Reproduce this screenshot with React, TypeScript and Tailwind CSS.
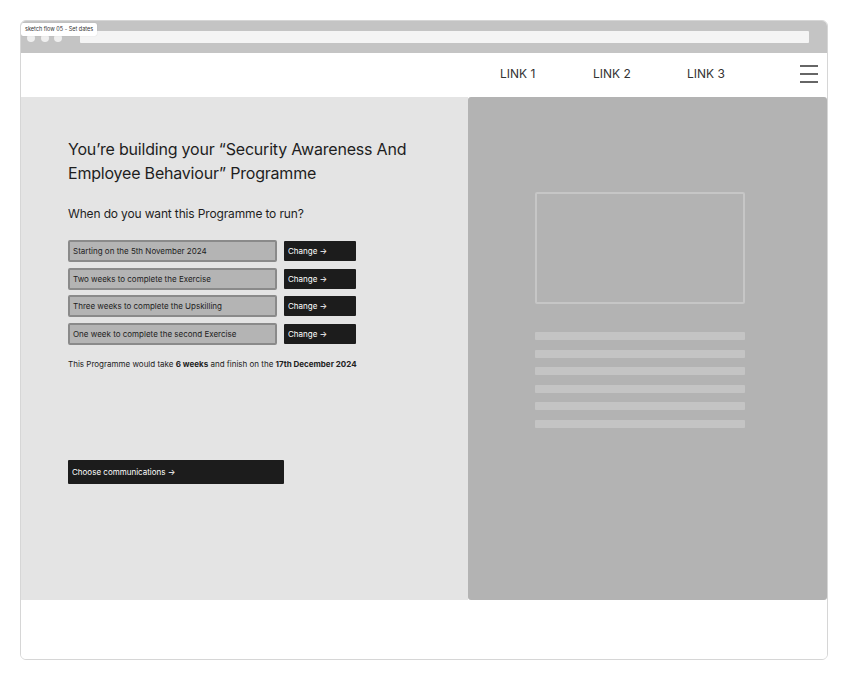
const rows = [
    'Starting on the 5th November 2024',
    'Two weeks to complete the Exercise',
    'Three weeks to complete the Upskilling',
    'One week to complete the second Exercise',
];

export default function App() {
    return (
        <div className="w-[848px] h-[680px] bg-white pt-[20px] pl-[20px] font-['Inter',sans-serif] text-[#222]">
            <div className="relative w-[808px] h-[640px] border border-[#d6d6d6] rounded-[6px] overflow-hidden flex flex-col">
                {/* browser chrome */}
                <div className="h-[32px] bg-[#c4c4c4] flex items-center pl-[6px] pr-[18px] shrink-0">
                    <div className="flex gap-[5.5px] mt-[2px]">
                        <span className="w-[8px] h-[8px] rounded-full bg-[#efefef]" />
                        <span className="w-[8px] h-[8px] rounded-full bg-[#efefef]" />
                        <span className="w-[8px] h-[8px] rounded-full bg-[#efefef]" />
                    </div>
                    <div className="ml-[18px] flex-1 h-[12px] bg-[#f4f4f4] rounded-[1px]" />
                </div>
                <div className="absolute left-0 top-[2px] h-[13px] px-[4px] bg-white text-[5.5px] leading-[13px] text-[#333] rounded-[2px] shadow-[0_0_1px_rgba(0,0,0,0.2)]">
                    sketch flow 05 - Set dates
                </div>

                {/* nav */}
                <div className="h-[44px] bg-white flex items-center pb-[3px] shrink-0 text-[12px] text-[#333]">
                    <div className="ml-[479px] w-[93px]">LINK 1</div>
                    <div className="w-[94px]">LINK 2</div>
                    <div className="w-[113px]">LINK 3</div>
                    <div className="flex flex-col gap-[6px]">
                        <span className="w-[18px] h-[2px] bg-[#666]" />
                        <span className="w-[18px] h-[2px] bg-[#666]" />
                        <span className="w-[18px] h-[2px] bg-[#666]" />
                    </div>
                </div>

                {/* main */}
                <div className="h-[503px] flex shrink-0">
                    <div className="w-[447px] shrink-0 bg-[#e4e4e4] pl-[47px] pt-[40px]">
                        <h1 className="text-[16px] leading-[24px] text-[#1e1e1e] tracking-[-0.2px]">
                            You’re building your “Security Awareness And<br />Employee Behaviour” Programme
                        </h1>
                        <h2 className="mt-[20px] text-[12px] leading-[18px] text-[#1e1e1e] tracking-[-0.15px]">
                            When do you want this Programme to run?
                        </h2>
                        <div className="mt-[17px] flex flex-col gap-[5.5px]">
                            {rows.map(r => (
                                <div key={r} className="flex items-center gap-[7px]">
                                    <div className="w-[209px] h-[22px] border-2 border-[#8a8a8a] bg-[#b4b4b4] rounded-[2px] flex items-center pl-[3px] text-[8px] text-[#222]">
                                        {r}
                                    </div>
                                    <div className="w-[72px] h-[20px] bg-[#1c1c1c] rounded-[1px] flex items-center pl-[4px] text-[8px] text-white">
                                        Change →
                                    </div>
                                </div>
                            ))}
                        </div>
                        <p className="mt-[12px] text-[8px] leading-[14px] text-[#222]">
                            This Programme would take <b>6 weeks</b> and finish on the <b>17th December 2024</b>
                        </p>
                        <div className="mt-[89px] w-[216px] h-[24px] bg-[#1c1c1c] rounded-[1px] flex items-center pl-[4px] text-[8px] text-white">
                            Choose communications →
                        </div>
                    </div>
                    <div className="flex-1 bg-[#b3b3b3] rounded-[3px] pl-[67px] pt-[95px]">
                        <div className="w-[210px] h-[112px] border-2 border-[#c6c6c6] rounded-[2px]" />
                        <div className="mt-[28px] flex flex-col gap-[9.5px]">
                            {[0, 1, 2, 3, 4, 5].map(i => (
                                <div key={i} className="w-[210px] h-[8px] bg-[#c4c4c4] rounded-[1px]" />
                            ))}
                        </div>
                    </div>
                </div>

                <div className="flex-1 bg-white" />
            </div>
        </div>
    );
}
